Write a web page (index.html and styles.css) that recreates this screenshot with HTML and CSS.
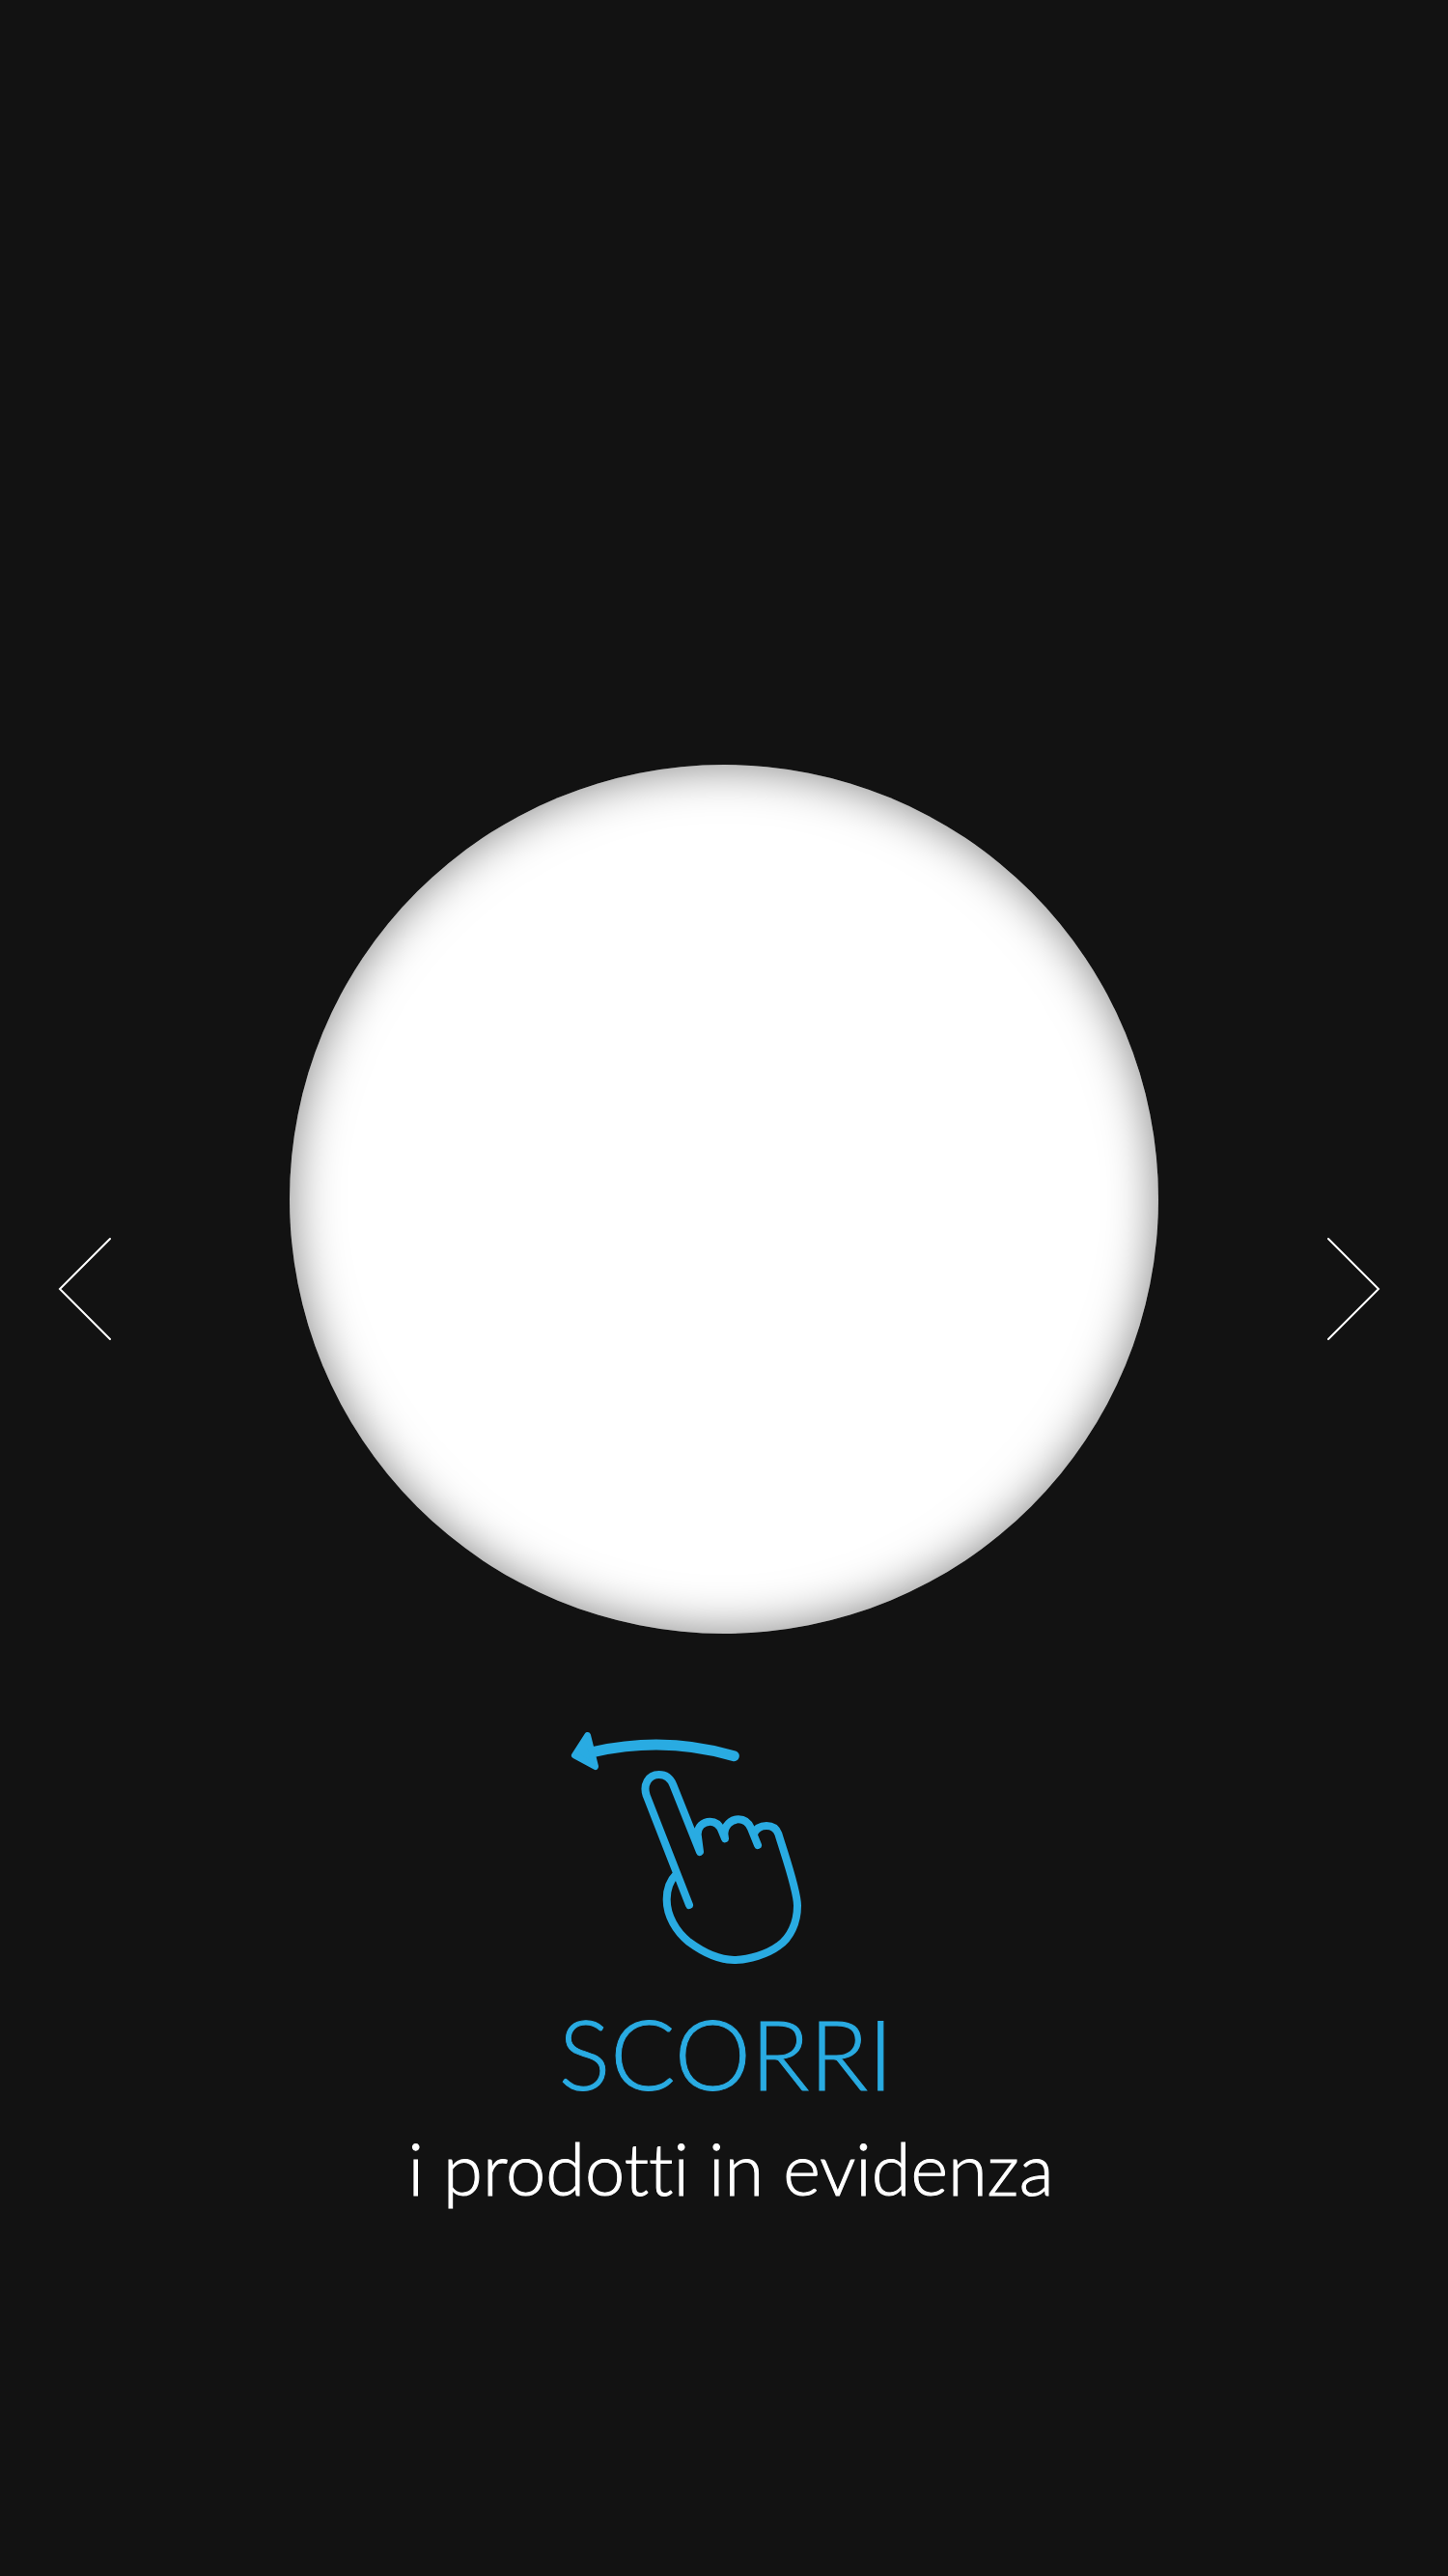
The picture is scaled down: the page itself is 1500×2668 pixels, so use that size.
FILE: index.html
```html
<!DOCTYPE html>
<html lang="it">
<head>
<meta charset="utf-8">
<meta name="viewport" content="width=device-width, initial-scale=1">
<title>Prodotti in evidenza</title>
<link rel="stylesheet" href="styles.css">
</head>
<body>
<main class="page">
  <section class="carousel">
    <button class="arrow arrow-prev" type="button" aria-label="Precedente">
      <svg width="56" height="108" viewBox="0 0 56 108"><path d="M54 2 2 54l52 52"/></svg>
    </button>
    <div class="disc"></div>
    <button class="arrow arrow-next" type="button" aria-label="Successivo">
      <svg width="56" height="108" viewBox="0 0 56 108"><path d="M2 2l52 52L2 106"/></svg>
    </button>
  </section>
  <section class="hint">
    <svg class="swipe" width="320" height="244" viewBox="60 66 960 732" aria-hidden="true">
      <path class="swipe-trail" d="M136 133Q356 83 571 146"/>
      <path class="swipe-head" d="M116 82 76 144l64 35Z"/>
      <path class="swipe-hand" d="M432 609 299 269C288 236 304 204 338 204Q369 204 382 236L465 444 458 391C457 366 475 350 497 350Q522 350 533 378L543 403 541 388C542 362 561 343 585 343Q612 343 624 371L645 423M633 388C640 371 655 363 672 363Q700 363 709 388C729 454 768 563 768 611C768 664 746 711 710 736C675 762 617 780 571 780C521 780 477 758 431 724C391 692 362 643 362 592Q362 543 391 514"/>
    </svg>
    <h1 class="title">SCORRI</h1>
    <p class="subtitle">i prodotti in evidenza</p>
  </section>
</main>
</body>
</html>
```
FILE: styles.css
```css
* {
  box-sizing: border-box;
}

body {
  margin: 0;
  background: #121212;
  color: #fff;
  font-family: Lato, "Open Sans", sans-serif;
  font-weight: 300;
  font-variant-ligatures: none;
}

.page {
  min-height: 100vh;
  padding-top: 792px;
}

.carousel {
  display: grid;
  grid-template-columns: 1fr 60% 1fr;
  align-items: center;
}

.disc {
  aspect-ratio: 1;
  border-radius: 50%;
  background: #fff;
  box-shadow: inset 0 0 50px rgba(0, 0, 0, 0.5);
}

.arrow {
  display: block;
  margin: 0 60px;
  padding: 186px 0 0;
  border: 0;
  background: none;
  cursor: pointer;
}

.arrow-prev {
  justify-self: start;
}

.arrow-next {
  justify-self: end;
  margin-right: 70px;
}

.arrow svg {
  display: block;
  fill: none;
  stroke: #fff;
  stroke-width: 2;
  stroke-linecap: round;
}

.hint {
  display: flex;
  flex-direction: column;
  align-items: center;
  padding: 100px 24px;
  text-align: center;
}

.swipe {
  display: block;
  fill: none;
  stroke: #29abe2;
  stroke-linecap: round;
  stroke-linejoin: round;
}

.swipe-trail {
  stroke-width: 33;
}

.swipe-head {
  fill: #29abe2;
  stroke-width: 20;
}

.swipe-hand {
  stroke-width: 24;
}

.title,
.subtitle {
  -webkit-text-stroke: 1px currentColor;
}

.title {
  margin: 30px 0 0;
  padding-left: 4px;
  color: #29abe2;
  font-size: 100px;
  line-height: 120px;
  font-weight: 300;
}

.subtitle {
  margin: 12px 0 0;
  padding-left: 14px;
  font-size: 74px;
  line-height: 96px;
}
```
